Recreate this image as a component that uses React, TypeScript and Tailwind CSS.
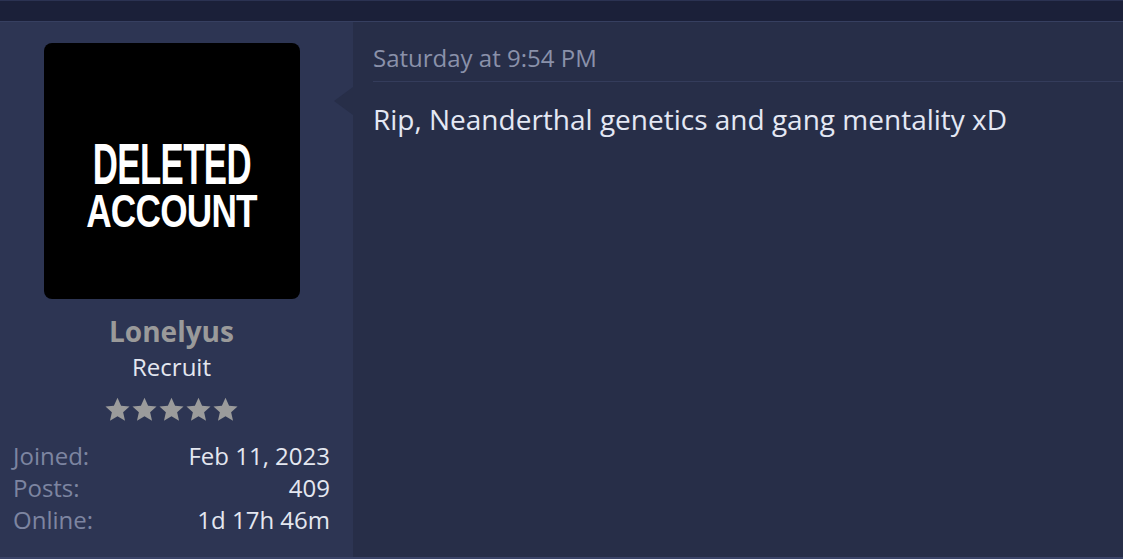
import React from 'react';

const stats = [
  { label: 'Joined:', value: 'Feb 11, 2023' },
  { label: 'Posts:', value: '409' },
  { label: 'Online:', value: '1d 17h 46m' },
];

function Star() {
  return (
    <svg viewBox="0 0 24 24" className="w-[27px] h-[27px]" fill="#9b9b9b">
      <path d="M12 1.6l3.2 7 7.5.7-5.7 5.1 1.7 7.5L12 18l-6.7 3.9 1.7-7.5-5.7-5.1 7.5-.7z" />
    </svg>
  );
}

export default function App() {
  return (
    <div
      className="w-[1123px] h-[559px] flex flex-col bg-[#272e48] overflow-hidden"
      style={{ fontFamily: '"Open Sans", "Noto Sans", sans-serif' }}
    >
      {/* top strip */}
      <div className="h-[22px] shrink-0 bg-[#1b2039] border-t border-t-[#2b3252] border-b border-b-[#363f60]" />

      <div className="flex flex-1 min-h-0 border-b-2 border-b-[#3a4367]">
        {/* User info column */}
        <div className="w-[353px] shrink-0 bg-[#2d3553] pl-[13px] pr-[23px] pt-[21px] flex flex-col items-center">
          <div className="w-[256px] h-[256px] rounded-lg bg-black flex flex-col items-center justify-center pt-[28px]">
            <div
              className="text-white font-bold leading-[46px] scale-x-[0.6] text-[58px] tracking-[-1px]"
              style={{ fontFamily: '"Liberation Sans", Arial, sans-serif' }}
            >
              DELETED
            </div>
            <div
              className="text-white font-bold leading-[37px] scale-x-[0.765] text-[46px] tracking-[-1px] mt-[6px]"
              style={{ fontFamily: '"Liberation Sans", Arial, sans-serif' }}
            >
              ACCOUNT
            </div>
          </div>

          <div className="mt-[16px] text-[28px] leading-[32px] font-bold text-[#9a9a9a]">Lonelyus</div>
          <div className="text-[24px] leading-[28px] text-[#e4e7f0] mt-[6px]">Recruit</div>
          <div className="flex mt-[15px]">
            {Array.from({ length: 5 }).map((_, i) => (
              <Star key={i} />
            ))}
          </div>

          <div className="w-full mt-[17px] flex flex-col">
            {stats.map((s) => (
              <div key={s.label} className="flex justify-between text-[24px] leading-[32px]">
                <span className="text-[#7d85a1]">{s.label}</span>
                <span className="text-[#e4e7f0]">{s.value}</span>
              </div>
            ))}
          </div>
        </div>

        {/* Message column */}
        <div className="relative flex-1 pl-[20px] pt-[20px]">
          <div className="absolute left-[-19px] top-[65px] w-0 h-0 border-y-[14px] border-y-transparent border-r-[19px] border-r-[#272e48]" />
          <div className="text-[24px] leading-[32px] text-[#8a91aa] pb-[7px] border-b border-b-[#343c5b]">
            Saturday at 9:54 PM
          </div>
          <div className="mt-[20px] text-[28px] leading-[34px] text-[#e4e8f4]">
            Rip, Neanderthal genetics and gang mentality xD
          </div>
        </div>
      </div>
    </div>
  );
}
